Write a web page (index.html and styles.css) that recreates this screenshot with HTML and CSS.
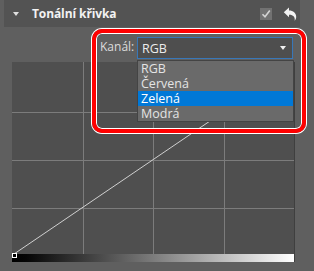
FILE: index.html
```html
<!DOCTYPE html>
<html lang="cs">
<head>
<meta charset="utf-8">
<title>Tonální křivka</title>
<link rel="stylesheet" href="styles.css">
</head>
<body>
<div class="panel">
  <div class="header">
    <span class="caret"></span>
    <span class="title">Tonální křivka</span>
    <span class="spacer"></span>
    <span class="check">
      <svg width="12" height="12" viewBox="0 0 12 12"><path d="M2.5 6.2 L5 8.8 L9.8 2.6" fill="none" stroke="#d4d4d4" stroke-width="1.6"/></svg>
    </span>
    <span class="undo">
      <svg width="14" height="14" viewBox="0 0 14 14"><path d="M0.8 5.2 L6 0.6 V3.4 C10.2 3.4 13.2 6 13.2 9.8 C13.2 11.4 12.6 12.8 11.6 13.8 C12 12.2 11.9 9.6 9.4 8.4 C8.4 7.9 7.2 7.8 6 7.8 V10.2 Z" fill="#f2f2f2"/></svg>
    </span>
  </div>

  <div class="channel">
    <span class="label">Kanál:</span>
    <div class="select">
      <span class="value">RGB</span>
      <span class="arrow"></span>
    </div>
  </div>

  <div class="graph">
    <svg width="282" height="200" viewBox="0 0 282 200">
      <defs>
        <linearGradient id="g" x1="0" y1="0" x2="1" y2="0">
          <stop offset="0" stop-color="#000"/>
          <stop offset="0.05" stop-color="#050505"/>
          <stop offset="1" stop-color="#fff"/>
        </linearGradient>
      </defs>
      <rect x="0" y="0" width="282" height="192" fill="#4f4f4f"/>
      <g stroke="#7c7c7c" stroke-width="1">
        <line x1="71.5" y1="0" x2="71.5" y2="193"/>
        <line x1="141.5" y1="0" x2="141.5" y2="193"/>
        <line x1="212.5" y1="0" x2="212.5" y2="193"/>
        <line x1="0" y1="50.5" x2="282" y2="50.5"/>
        <line x1="0" y1="98.5" x2="282" y2="98.5"/>
        <line x1="0" y1="146.5" x2="282" y2="146.5"/>
      </g>
      <rect x="0" y="192" width="282" height="8" fill="url(#g)"/>
      <line x1="2" y1="192" x2="282" y2="2" stroke="#d0d0d0" stroke-width="1"/>
      <rect x="0.5" y="191.5" width="4" height="4" fill="#000" stroke="#fff" stroke-width="1"/>
    </svg>
  </div>

  <div class="list">
    <div class="item">RGB</div>
    <div class="item">Červená</div>
    <div class="item selected">Zelená</div>
    <div class="item">Modrá</div>
  </div>

  <div class="highlight"></div>
</div>
</body>
</html>
```

FILE: styles.css
```css
html, body {
  margin: 0;
  padding: 0;
}

body {
  width: 314px;
  height: 271px;
  background: #5f5f5f;
  font-family: "Open Sans", "Noto Sans", sans-serif;
  overflow: hidden;
}

.panel {
  position: relative;
  width: 314px;
  height: 271px;
}

.header {
  margin-left: 4px;
  width: 296px;
  height: 27px;
  background: #535353;
  display: flex;
  align-items: center;
  box-sizing: border-box;
  padding-left: 9px;
  padding-right: 3px;
}

.caret {
  width: 0;
  height: 0;
  border-left: 3px solid transparent;
  border-right: 3px solid transparent;
  border-top: 4px solid #e0e0e0;
  margin-right: 13px;
}

.title {
  font-weight: bold;
  font-size: 12px;
  color: #f2f2f2;
  letter-spacing: -0.1px;
}

.spacer {
  flex: 1;
}

.check {
  width: 12px;
  height: 12px;
  background: #727272;
  display: flex;
  margin-right: 11px;
}

.undo {
  width: 14px;
  height: 14px;
  display: flex;
}

.channel {
  display: flex;
  align-items: center;
  margin-top: 10px;
  padding-left: 100px;
  height: 22px;
}

.label {
  flex: 0 0 37px;
  font-size: 12px;
  color: #dcdcdc;
  margin-top: -3px;
}

.select {
  width: 156px;
  height: 22px;
  box-sizing: border-box;
  border: 1px solid #3877b8;
  background: #4e4e4e;
  display: flex;
  align-items: center;
  justify-content: space-between;
  padding: 0 6px 0 4px;
}

.value {
  font-size: 12.5px;
  color: #ececec;
}

.arrow {
  width: 0;
  height: 0;
  border-left: 3.5px solid transparent;
  border-right: 3.5px solid transparent;
  border-top: 4px solid #f0f0f0;
}

.graph {
  margin-top: 3px;
  margin-left: 12px;
  width: 282px;
  height: 200px;
  border-right: 1px solid #3f3f3f;
  display: flex;
}

.list {
  position: absolute;
  left: 137px;
  top: 60px;
  width: 157px;
  box-sizing: border-box;
  border: 1px solid #444;
  background: #6a6a6a;
}

.item {
  height: 15px;
  line-height: 15px;
  font-size: 12.5px;
  color: #e4e4e4;
  padding-left: 3px;
}

.item.selected {
  background: #0078d7;
  color: #ffffff;
}

.highlight {
  position: absolute;
  left: 92px;
  top: 29px;
  width: 214px;
  height: 104px;
  box-sizing: border-box;
  border: 4px solid #ff0000;
  border-radius: 10px;
  box-shadow: 0 0 0 1px #ffffff, inset 0 0 0 1px #ffffff;
}
```
